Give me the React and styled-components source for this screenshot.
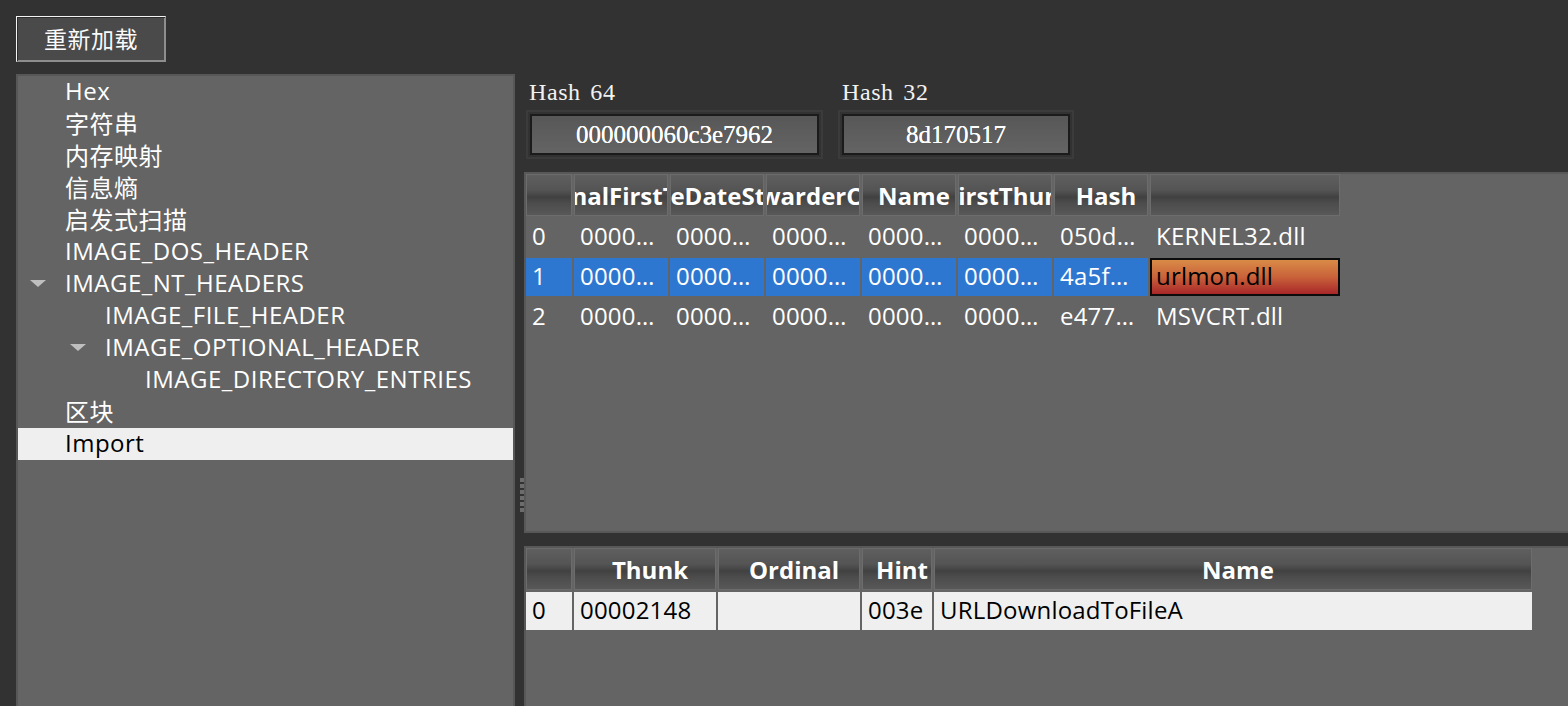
import React from 'react';
import styled, { createGlobalStyle } from 'styled-components';

const UI = `"Open Sans", "Noto Sans CJK SC", sans-serif`;
const SERIF = `"Liberation Serif", "Noto Sans CJK SC", serif`;

const Global = createGlobalStyle`
  html, body { margin: 0; padding: 0; background: #323232; overflow: hidden; }
  body { font-family: ${UI}; }
  * { box-sizing: border-box; }
`;

const Page = styled.div`
  width: 1568px;
  height: 706px;
  display: flex;
  flex-direction: column;
  padding: 16px 0 0 16px;
  overflow: hidden;
`;

const Toolbar = styled.div`
  display: flex;
  height: 46px;
  margin-bottom: 12px;
  flex: 0 0 auto;
`;

const ReloadButton = styled.button`
  width: 150px;
  height: 46px;
  padding: 0 0 2px;
  background: #4a4a4a;
  color: #fafafa;
  font: 400 23px ${UI};
  letter-spacing: 0.5px;
  border: 1px solid;
  border-color: #f4f4f4 #8e8e8e #8e8e8e #f4f4f4;
  box-shadow: inset 1px 1px 0 #2c2c2c, inset -1px -1px 0 #8e8e8e;
`;

const Main = styled.div`
  flex: 1;
  min-height: 0;
  display: flex;
`;

const TreePanel = styled.div`
  width: 499px;
  flex: 0 0 auto;
  background: #646464;
  border: 2px solid #575757;
  border-bottom: none;
  display: flex;
  flex-direction: column;
`;

const TreeRow = styled.div`
  height: 32px;
  display: flex;
  align-items: center;
  padding-left: ${(p) => p.$level * 40}px;
  background: ${(p) => (p.$selected ? '#efefef' : 'transparent')};
  color: ${(p) => (p.$selected ? '#000' : '#fff')};
  font-size: 24px;
  letter-spacing: 0.5px;
  white-space: nowrap;
`;

const TreeLabel = styled.span`
  position: relative;
  top: -2px;
`;

const Expander = styled.div`
  width: 47px;
  flex: 0 0 auto;
  display: flex;
  align-items: center;
  padding-left: 12px;
`;

const VSplitter = styled.div`
  width: 9px;
  flex: 0 0 auto;
  display: flex;
  flex-direction: column;
  gap: 2px;
  padding: 404px 0 0 5px;
`;

const GripDot = styled.div`
  width: 4px;
  height: 4px;
  background: #6c6c6c;
`;

const RightCol = styled.div`
  flex: 1;
  min-width: 0;
  display: flex;
  flex-direction: column;
`;

const HashRow = styled.div`
  height: 98px;
  flex: 0 0 auto;
  display: flex;
  gap: 15px;
  padding-left: 2px;
`;

const HashGroup = styled.div`
  display: flex;
  flex-direction: column;
`;

const HashLabel = styled.div`
  margin-top: 5px;
  height: 25px;
  line-height: 24px;
  padding-left: ${(p) => p.$indent}px;
  font: 400 24px ${SERIF};
  letter-spacing: 0.6px;
  word-spacing: 3px;
  color: #f2f2f2;
`;

const HashFrame = styled.div`
  margin-top: 6px;
  width: ${(p) => p.$width}px;
  height: 49px;
  border: 2px solid #3b3b3b;
  padding: 2px;
  display: flex;
`;

const HashValue = styled.div`
  flex: 1;
  border: 2px solid #1b1b1b;
  background: linear-gradient(180deg, #575757, #646464);
  display: flex;
  align-items: center;
  justify-content: center;
  font: 400 25px ${SERIF};
  color: #fff;
  text-shadow: 0 0 0.4px #fff;
`;

const TablePanel = styled.div`
  flex: ${(p) => (p.$grow ? '1' : '0 0 auto')};
  height: ${(p) => (p.$grow ? 'auto' : '361px')};
  min-height: 0;
  background: #646464;
  border: 2px solid #585858;
  border-right: none;
  border-bottom: ${(p) => (p.$grow ? 'none' : '2px solid #585858')};
  overflow: hidden;
`;

const HSplitter = styled.div`
  height: 13px;
  flex: 0 0 auto;
`;

const Grid = styled.div`
  display: grid;
  grid-template-columns: ${(p) => p.$cols};
  grid-template-rows: 42px;
  grid-auto-rows: 38px;
  column-gap: 2px;
  row-gap: 2px;
`;

const HeaderCell = styled.div`
  border: 1px solid #6c6c6c;
  background: linear-gradient(
    180deg,
    #5f5f5f 0%,
    #545454 38%,
    #414141 55%,
    #4c4c4c 70%,
    #585858 100%
  );
  display: flex;
  align-items: center;
  justify-content: center;
  padding-left: 10px;
  overflow: hidden;
  color: #fff;
  font: 700 24px ${UI};

  span {
    flex: 0 0 auto;
    white-space: nowrap;
  }
`;

const cellBg = {
  plain: 'transparent',
  selected: '#2e77d1',
  light: '#efefef',
  hot: 'linear-gradient(180deg, #d98b47 0%, #c9623a 50%, #a8272a 100%)',
};

const Cell = styled.div`
  background: ${(p) => cellBg[p.$tone]};
  color: ${(p) => (p.$tone === 'plain' || p.$tone === 'selected' ? '#fff' : '#000')};
  border: ${(p) => (p.$tone === 'hot' ? '2px solid #0c0c0c' : 'none')};
  padding: 0 ${(p) => (p.$tone === 'light' ? 3 : 10)}px 0 ${(p) => (p.$tone === 'hot' ? 4 : 6)}px;
  font: 400 24px ${UI};
  letter-spacing: 0.2px;
  line-height: ${(p) => (p.$tone === 'hot' ? 32 : 36)}px;
  white-space: nowrap;
  overflow: hidden;
  text-overflow: ellipsis;
`;

const TriangleIcon = () => (
  <svg width="16" height="8" viewBox="0 0 16 8">
    <polygon points="0,0 16,0 8,7" fill="#bfbfbf" />
  </svg>
);

const treeItems = [
  { label: 'Hex', level: 0 },
  { label: '字符串', level: 0 },
  { label: '内存映射', level: 0 },
  { label: '信息熵', level: 0 },
  { label: '启发式扫描', level: 0 },
  { label: 'IMAGE_DOS_HEADER', level: 0 },
  { label: 'IMAGE_NT_HEADERS', level: 0, open: true },
  { label: 'IMAGE_FILE_HEADER', level: 1 },
  { label: 'IMAGE_OPTIONAL_HEADER', level: 1, open: true },
  { label: 'IMAGE_DIRECTORY_ENTRIES', level: 2 },
  { label: '区块', level: 0 },
  { label: 'Import', level: 0, selected: true },
];

const importCols = ['OriginalFirstThunk', 'TimeDateStamp', 'ForwarderChain', 'Name', 'FirstThunk', 'Hash', ''];
const imports = [
  ['0', '0000203C', '00000000', '00000000', '000020B4', '00002000', '050d3f1a', 'KERNEL32.dll'],
  ['1', '00002084', '00000000', '00000000', '000020C2', '00002048', '4a5f0c7e', 'urlmon.dll'],
  ['2', '00002064', '00000000', '00000000', '000020CE', '00002028', 'e4771b92', 'MSVCRT.dll'],
];

const thunkCols = ['', 'Thunk', 'Ordinal', 'Hint', 'Name'];
const thunks = [['0', '00002148', '', '003e', 'URLDownloadToFileA']];

export default function App() {
  const selectedImport = 1;
  return (
    <>
      <Global />
      <Page>
        <Toolbar>
          <ReloadButton>重新加载</ReloadButton>
        </Toolbar>
        <Main>
          <TreePanel>
            {treeItems.map((it) => (
              <TreeRow key={it.label} $level={it.level} $selected={it.selected}>
                <Expander>{it.open && <TriangleIcon />}</Expander>
                <TreeLabel>{it.label}</TreeLabel>
              </TreeRow>
            ))}
          </TreePanel>
          <VSplitter>
            {Array.from({ length: 6 }).map((_, i) => (
              <GripDot key={i} />
            ))}
          </VSplitter>
          <RightCol>
            <HashRow>
              <HashGroup>
                <HashLabel $indent={3}>Hash 64</HashLabel>
                <HashFrame $width={297}>
                  <HashValue>000000060c3e7962</HashValue>
                </HashFrame>
              </HashGroup>
              <HashGroup>
                <HashLabel $indent={4}>Hash 32</HashLabel>
                <HashFrame $width={236}>
                  <HashValue>8d170517</HashValue>
                </HashFrame>
              </HashGroup>
            </HashRow>
            <TablePanel>
              <Grid $cols="46px repeat(6, 94px) 190px">
                <HeaderCell />
                {importCols.map((c, i) => (
                  <HeaderCell key={i}>
                    <span>{c}</span>
                  </HeaderCell>
                ))}
                {imports.map((row, r) =>
                  row.map((v, c) => {
                    let tone = 'plain';
                    if (r === selectedImport) tone = c === row.length - 1 ? 'hot' : 'selected';
                    return (
                      <Cell key={`${r}-${c}`} $tone={tone}>
                        {v}
                      </Cell>
                    );
                  })
                )}
              </Grid>
            </TablePanel>
            <HSplitter />
            <TablePanel $grow>
              <Grid $cols="46px 142px 142px 70px 598px">
                {thunkCols.map((c, i) => (
                  <HeaderCell key={i}>
                    <span>{c}</span>
                  </HeaderCell>
                ))}
                {thunks.map((row, r) =>
                  row.map((v, c) => (
                    <Cell key={`${r}-${c}`} $tone="light">
                      {v}
                    </Cell>
                  ))
                )}
              </Grid>
            </TablePanel>
          </RightCol>
        </Main>
      </Page>
    </>
  );
}
